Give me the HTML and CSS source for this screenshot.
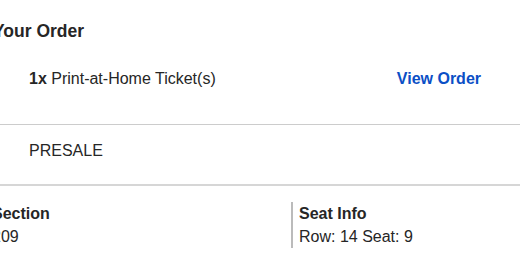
FILE: index.html
```html
<!DOCTYPE html>
<html>
<head>
<meta charset="utf-8">
<link rel="stylesheet" href="styles.css">
</head>
<body>
<div class="page">
  <h2 class="title">Your Order</h2>
  <div class="row ticket-row">
    <span class="ticket"><b>1x</b> Print-at-Home Ticket(s)</span>
    <a class="view" href="#">View Order</a>
  </div>
  <div class="row presale-row">PRESALE</div>
  <div class="seats">
    <div class="cell first">
      <div class="label">Section</div>
      <div class="value">209</div>
    </div>
    <div class="cell divided">
      <div class="label">Seat Info</div>
      <div class="value">Row: 14 Seat: 9</div>
    </div>
  </div>
</div>
</body>
</html>
```
FILE: styles.css
```css
html, body {
  margin: 0;
  padding: 0;
  background: #fff;
}
body {
  font-family: "Liberation Sans", Arial, sans-serif;
  color: #262626;
  overflow: hidden;
}
.page {
  margin-left: -7px;
  width: 540px;
}
.title {
  margin: 0;
  padding-top: 19px;
  font-size: 17.5px;
  line-height: 24px;
  font-weight: bold;
}
.row {
  display: flex;
  align-items: center;
  font-size: 16px;
  line-height: 20px;
  padding-left: 36px;
  border-bottom: 1px solid #ccc;
}
.ticket-row {
  justify-content: space-between;
  padding-top: 26px;
  padding-bottom: 35px;
  padding-right: 52px;
}
.ticket b { font-weight: bold; }
.view {
  color: #0b4fc6;
  font-weight: bold;
  text-decoration: none;
}
.presale-row {
  padding-top: 16px;
  padding-bottom: 23px;
  border-bottom-width: 2px;
  border-bottom-color: #d6d6d6;
}
.seats {
  display: grid;
  grid-template-columns: 298px 1fr;
  padding-top: 16px;
  font-size: 16px;
  line-height: 23px;
}
.first { margin-left: -1px; }
.divided {
  border-left: 2px solid #bbb;
  padding-left: 6px;
}
.label { font-weight: bold; }
```
